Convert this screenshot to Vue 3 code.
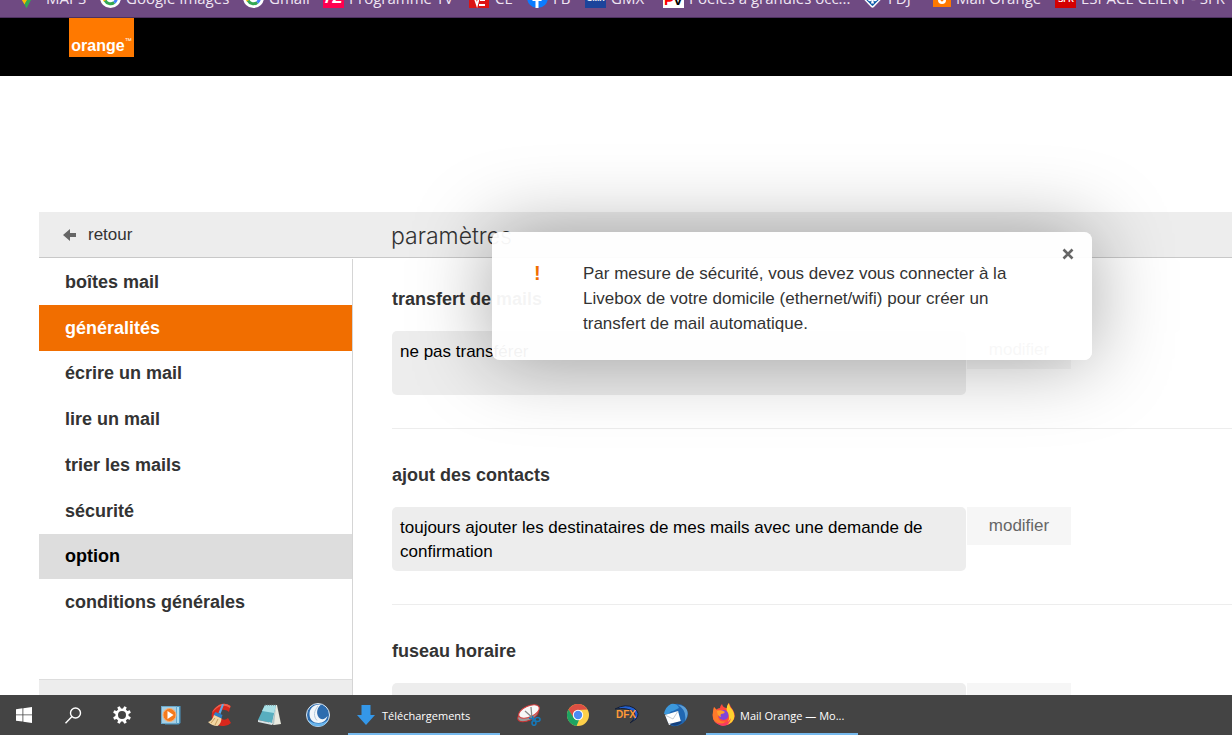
<template>
  <div class="screen">
    <!-- barre de favoris du navigateur -->
    <nav class="bookmarks" aria-label="favoris">
      <a v-for="b in bookmarks" :key="b.label" href="#" class="bookmark">
        <svg v-if="b.icon === 'maps'" class="fav" viewBox="0 0 21 21">
          <path d="M3.500 8L10.500 21L17.500 8C17.500 4 14 1 10.500 1S3.500 4 3.500 8z" fill="#34a853" />
          <path d="M3.500 8a7 7 0 0 1 3-6l5 5-6 6z" fill="#ea4335" />
          <path d="M4 10l4.500 7.500 5-8.500-3-2z" fill="#fbbc04" />
          <path d="M8.500 17.500L10.500 21l5-9-2-3z" fill="#34a853" />
        </svg>
        <svg v-else-if="b.icon === 'google'" class="fav" viewBox="0 0 21 21">
          <circle cx="10.500" cy="10.500" r="10.500" fill="#fff" />
          <path d="M5.200 7.500a6 6 0 0 1 10-1.500" fill="none" stroke="#ea4335" stroke-width="3" />
          <path d="M5.200 7.500a6 6 0 0 0 0 6.500" fill="none" stroke="#fbbc05" stroke-width="3" />
          <path d="M5.200 13.500a6 6 0 0 0 9 2" fill="none" stroke="#34a853" stroke-width="3" />
          <path d="M10.500 10.500h6a6 6 0 0 1-2.300 5" fill="none" stroke="#4285f4" stroke-width="3" />
        </svg>
        <svg v-else-if="b.icon === 'tele'" class="fav" viewBox="0 0 21 21">
          <rect width="21" height="21" fill="#ff0050" />
          <text x="10" y="16" font-size="16" font-style="italic" font-weight="bold" text-anchor="middle" fill="#fff">7Z</text>
        </svg>
        <svg v-else-if="b.icon === 'ce'" class="fav" viewBox="0 0 21 21">
          <rect width="20" height="21" fill="#dc1414" />
          <path d="M3 12h3l2 6 3-11h7M11 13h5M10 18h6" fill="none" stroke="#fff" stroke-width="1.800" />
        </svg>
        <svg v-else-if="b.icon === 'facebook'" class="fav" viewBox="0 0 21 21">
          <circle cx="10.500" cy="10.500" r="10.500" fill="#0a7cff" />
          <path d="M8.500 21v-7H5.500v-3h3V8.500C8.500 5.500 10 4 12.500 4h2v3H13c-1.200 0-1.500.7-1.500 1.700V11h3.500l-.5 3h-3v7z" fill="#fff" />
        </svg>
        <svg v-else-if="b.icon === 'gmx'" class="fav" viewBox="0 0 21 21">
          <rect width="21" height="21" fill="#1c449b" />
          <text x="10.500" y="14" font-size="8" font-weight="bold" text-anchor="middle" fill="#fff">GMX</text>
        </svg>
        <svg v-else-if="b.icon === 'pv'" class="fav" viewBox="0 0 21 21">
          <rect width="21" height="21" fill="#fff" />
          <text x="1" y="18" font-size="15" font-weight="bold" fill="#f00">P</text>
          <text x="10" y="18" font-size="15" font-weight="bold" fill="#000">V</text>
        </svg>
        <svg v-else-if="b.icon === 'fdj'" class="fav" viewBox="0 0 21 21">
          <path d="M0 10.500L10.500 0L21 10.500L12 20q-1.500 1.400-3 0z" fill="#fff" />
          <path d="M1.800 10.500L10.500 2l8.700 8.500-8 8q-.7.800-1.400 0z" fill="#0c5ba8" />
          <circle cx="8" cy="12" r="2.200" fill="#fff" />
          <circle cx="13" cy="12" r="2.200" fill="#fff" />
          <circle cx="10.500" cy="8" r="2.200" fill="#fff" />
          <path d="M10 12l-1 4.500h3L11 12z" fill="#fff" />
        </svg>
        <svg v-else-if="b.icon === 'mail'" class="fav fav-small" viewBox="0 0 18 18">
          <rect width="18" height="18" fill="#ff7900" />
          <path d="M5 7h8v4q0 4-4 4t-4-4z" fill="#fff" />
          <path d="M6.500 9l2.500 2.500L11.500 9" fill="none" stroke="#ff7900" stroke-width="1.800" />
        </svg>
        <svg v-else class="fav" viewBox="0 0 21 21">
          <rect width="21" height="21" fill="#d40000" />
          <text x="11" y="15" font-size="8" font-weight="bold" text-anchor="middle" fill="#fff">SFR</text>
        </svg>
        <span>{{ b.label }}</span>
      </a>
    </nav>

    <header class="site-header">
      <a href="#" class="logo"><span>orange</span><sup>™</sup></a>
    </header>

    <div class="settings">
      <div class="title-bar">
        <a href="#" class="back">
          <svg width="14" height="12" viewBox="0 0 14 12">
            <path d="M0 6L7 0v4h6v4H7v4z" fill="#666" />
          </svg>
          retour
        </a>
        <h1>paramètres</h1>
      </div>

      <div class="columns">
        <aside>
          <ul class="menu">
            <li v-for="item in menu" :key="item">
              <a href="#" :class="{ active: item === current, hovered: item === hovered }" @click.prevent="current = item">{{ item }}</a>
            </li>
          </ul>
          <div class="menu-footer"></div>
        </aside>

        <main>
          <section v-for="s in sections" :key="s.title">
            <h2>{{ s.title }}</h2>
            <div class="setting">
              <p>{{ s.value }}</p>
              <button type="button">modifier</button>
            </div>
          </section>
        </main>
      </div>

      <!-- message d'avertissement -->
      <div v-if="showAlert" class="overlay">
        <div class="alert" role="alertdialog" aria-labelledby="alert-text">
          <span class="mark">!</span>
          <p id="alert-text">Par mesure de sécurité, vous devez vous connecter à la Livebox de votre domicile (ethernet/wifi) pour créer un transfert de mail automatique.</p>
          <button type="button" class="close" aria-label="fermer" @click="showAlert = false">
            <svg width="12" height="12" viewBox="0 0 12 12">
              <path d="M1.500 1.500l9 9M10.500 1.500l-9 9" stroke="#666" stroke-width="2.600" />
            </svg>
          </button>
        </div>
      </div>
    </div>

    <!-- barre des tâches -->
    <footer class="taskbar">
      <button type="button" aria-label="Démarrer">
        <svg width="16" height="16" viewBox="0 0 16 16" fill="#fff">
          <path d="M0 2.200l6.500-.9v6.200H0zM7.300 1.200L16 0v7.500H7.300zM0 8.300h6.500v6.300L0 13.700zM7.300 8.300H16V16l-8.700-1.200z" />
        </svg>
      </button>
      <button type="button" aria-label="Rechercher">
        <svg width="17" height="17" viewBox="0 0 17 17" fill="none" stroke="#fff" stroke-width="1.400">
          <circle cx="10.500" cy="6" r="5" />
          <path d="M7 9.500L.5 16.300" />
        </svg>
      </button>
      <button type="button" aria-label="Paramètres">
        <svg width="18" height="18" viewBox="0 0 18 18">
          <circle cx="9" cy="9" r="5.300" fill="none" stroke="#fff" stroke-width="2.600" />
          <path v-for="a in 8" :key="a" :transform="`rotate(${a * 45 + 22.5} 9 9)`" d="M7.300 3.500L7.700 0h2.600l.4 3.500z" fill="#fff" />
        </svg>
      </button>
      <button type="button" aria-label="Lecteur multimédia">
        <svg width="20" height="20" viewBox="0 0 20 20">
          <path d="M4 1h15.500v17l-2 1.500H4z" fill="#4d98c4" />
          <path d="M16 2h2v16h-2z" fill="#a9daee" />
          <rect x="0.500" y="1.500" width="15" height="17" fill="#a5cfe5" stroke="#6aa9cb" />
          <circle cx="8.500" cy="10" r="6.500" fill="#f47a1c" stroke="#fbb071" />
          <path d="M6.500 6l6 4-6 4z" fill="#fff" />
        </svg>
      </button>
      <button type="button" aria-label="CCleaner">
        <svg width="24" height="24" viewBox="0 0 24 24">
          <path d="M22.500 3Q17-1 11 2 2 7 4 15q3 9 12 8 4 0 7-3l-3-5q-3 3-6 1-4-2-3-6 2-4 6-3 2 0 4 2z" fill="#d8271c" />
          <path d="M22.500 3Q17-1 11 2 6 5 4 10q5-6 9-7 5-1 9 2z" fill="#f0604c" />
          <path d="M14 1l2 .5L12.500 11l-2-1z" fill="#5aa9e6" />
          <path d="M7.500 9l7 3-1 3.500-8-3.500z" fill="#2d7fc5" />
          <path d="M6 12l7.500 3.500Q13 21 9.500 23 4 23 0 19q4-1 6-7z" fill="#f2d6a2" />
          <path d="M7 15l-4 5M10 16l-3 6" stroke="#c79d5c" />
        </svg>
      </button>
      <button type="button" aria-label="Bloc-notes">
        <svg width="23" height="22" viewBox="0 0 23 22">
          <path d="M7 1h12l4 19-7 1-5-2z" fill="#e8e9df" />
          <path d="M7 1h11l-4 18L0 16z" fill="#58aebf" />
          <path d="M7 1h11l-2 8L4 7z" fill="#a9e0e6" />
          <path d="M18 3l-4 16 2 2z" fill="#b4c4c6" />
          <path d="M0 16l14 3v2L0 18z" fill="#d9e3e6" />
          <path d="M7 1h12" stroke="#666" stroke-dasharray="1 1" />
        </svg>
      </button>
      <button type="button" aria-label="Navigateur">
        <svg width="24" height="24" viewBox="0 0 24 24">
          <circle cx="12" cy="12" r="11.500" fill="#2d6cae" stroke="#dce8f2" />
          <path d="M2 17a11 11 0 0 0 20 0q-9 7-20 0z" fill="#69b5ec" />
          <path d="M15 1.500C7 1 3.500 6 3.500 11c0 6 4 9 9 9s8-3 9-7c-2 3-5 4-7.500 2.500-4-3-4-10 1-14z" fill="#f1f6fa" />
          <path d="M12 3C8 8 7 13 11 17.500" fill="none" stroke="#b3cadd" />
        </svg>
      </button>
      <button type="button" class="window">
        <svg width="18" height="20" viewBox="0 0 18 20">
          <path d="M4.500 0h9v10H18l-9 10-9-10h4.500z" fill="#3497e8" />
        </svg>
        <span>Téléchargements</span>
      </button>
      <button type="button" aria-label="Outil Capture">
        <svg width="24" height="22" viewBox="0 0 24 22">
          <ellipse cx="11" cy="11" rx="11" ry="5.500" fill="#9a9a9a" stroke="#c83232" transform="rotate(-24 11 11)" />
          <ellipse cx="12" cy="7.500" rx="11" ry="5.500" fill="#f8f8f8" stroke="#d63c3c" transform="rotate(-24 12 7.500)" />
          <path d="M8 7l9 8M14 3l1 12" stroke="#888" stroke-width="1.300" />
          <ellipse cx="20.500" cy="15.500" rx="2.500" ry="2" fill="none" stroke="#1678b8" stroke-width="1.600" />
          <ellipse cx="17" cy="19" rx="2" ry="2.300" fill="none" stroke="#1678b8" stroke-width="1.600" />
          <path d="M12 14l6 1.500M15.500 12l1 5" stroke="#1678b8" stroke-width="1.600" />
        </svg>
      </button>
      <button type="button" aria-label="Chrome">
        <svg width="22" height="22" viewBox="0 0 22 22">
          <circle cx="11" cy="11" r="11" fill="#fdd04a" />
          <path d="M1.500 5.500A11 11 0 0 1 20.500 5.500L11 6 6.200 13.700z" fill="#dd4f43" />
          <path d="M1.500 5.500L6.500 13.500Q8.500 16.500 12 16L9.500 22A11 11 0 0 1 1.500 5.500z" fill="#1da462" />
          <circle cx="11" cy="11" r="5.200" fill="#fff" />
          <circle cx="11" cy="11" r="4.200" fill="#4c8bf5" />
        </svg>
      </button>
      <button type="button" aria-label="DFX">
        <svg width="24" height="20" viewBox="0 0 24 20">
          <path d="M0 4Q11-2 19 3q7 5 2 11l-6 4q7-6 4-11Q12 2 0 4z" fill="#225fd0" stroke="#172034" />
          <text x="11" y="13" font-size="10" font-weight="bold" text-anchor="middle" fill="#ff9a38">DFX</text>
        </svg>
      </button>
      <button type="button" aria-label="Thunderbird">
        <svg width="24" height="24" viewBox="0 0 24 24">
          <path d="M6 3Q14-2 21 4q5 7 1 13-5 7-14 6-5-3-6-10z" fill="#2067b2" />
          <path d="M0 11Q1 4 7 1q6-1 8 4L9 8Q6 8 4 12z" fill="#3c98dc" />
          <path d="M14 2q9 5 7 16 4-6 2-11-3-5-9-5z" fill="#5d9fd6" />
          <path d="M1 12l13-4 3 11-12 3z" fill="#fff" />
          <path d="M1 12l8 4 5-8" fill="none" stroke="#c5ccd4" />
          <path d="M4 20q7 6 14-1l-1-1-12 3z" fill="#15417e" />
        </svg>
      </button>
      <button type="button" class="window">
        <svg width="23" height="24" viewBox="0 0 23 24">
          <path d="M2 4q1 2 2 3 2-2 4-2 0-2 2-4 1 4 5 4 0-3 2-5 2 5 4 7 4 7-1 12-5 5-12 3Q-1 19 1 10z" fill="#ff4a3d" />
          <path d="M16.500 0q1 4 4 7 4 7-.5 12-3 3-7 3 6-5 3-11-3-5 .5-11z" fill="#ffd02e" />
          <path d="M2 4q3 4 6 3.500L6 14Q8 20 14 18q-5 6-11 1-4-5-1-15z" fill="#ff7a2a" />
          <path d="M2 17q4 5 11 3 4-1 6-5-1 7-8 8-6-1-9-6z" fill="#f83a64" />
          <circle cx="11.500" cy="12" r="5" fill="#8146d8" />
          <path d="M5 8q5-2 8 1-1 2-4 2-1 1 0 3-4-1-4-6z" fill="#ffa02a" />
        </svg>
        <span>Mail Orange — Mo...</span>
      </button>
    </footer>
  </div>
</template>

<script setup>
import { ref } from 'vue';

// favoris
const bookmarks = [
  { label: 'MAPS', icon: 'maps' },
  { label: 'Google Images', icon: 'google' },
  { label: 'Gmail', icon: 'google' },
  { label: 'Programme TV', icon: 'tele' },
  { label: 'CE', icon: 'ce' },
  { label: 'FB', icon: 'facebook' },
  { label: 'GMX', icon: 'gmx' },
  { label: 'Poêles à granulés occ...', icon: 'pv' },
  { label: 'FDJ', icon: 'fdj' },
  { label: 'Mail Orange', icon: 'mail' },
  { label: 'ESPACE CLIENT - SFR', icon: 'sfr' },
];

// menu de gauche
const menu = [
  'boîtes mail', 'généralités', 'écrire un mail', 'lire un mail',
  'trier les mails', 'sécurité', 'option', 'conditions générales',
];
const current = ref('généralités');
const hovered = ref('option');

const sections = [
  { title: 'transfert de mails', value: 'ne pas transférer' },
  { title: 'ajout des contacts', value: 'toujours ajouter les destinataires de mes mails avec une demande de confirmation' },
  { title: 'fuseau horaire', value: '' },
];

const showAlert = ref(true);
</script>

<style>
body {
  margin: 0;
  background: #fff;
}
</style>

<style scoped>
.screen {
  height: 100vh;
  display: flex;
  flex-direction: column;
  overflow: hidden;
  font-family: "Liberation Sans", Arial, sans-serif;
  font-size: 17px;
  color: #333;
}

a {
  color: inherit;
  text-decoration: none;
}

h1, h2, p, ul {
  margin: 0;
  padding: 0;
}

button {
  border: none;
  padding: 0;
  background: none;
  font: inherit;
  color: inherit;
  cursor: pointer;
}

svg {
  flex: none;
}

.bookmarks {
  flex: none;
  display: grid;
  grid-template-columns: 84px 143px 80px 146px 58px 58px 78px 199px 71px 122px 1fr;
  align-content: end;
  height: 8px;
  padding: 0 0 9px 16px;
  border-bottom: 1px solid #4d3160;
  background: #6f4a82;
  overflow: hidden;
  font-family: "Open Sans", "Noto Sans", sans-serif;
  font-size: 15px;
  line-height: 20px;
  color: #efe6f3;
}

.bookmark {
  display: flex;
  align-items: center;
  gap: 5px;
  height: 21px;
  white-space: nowrap;
}

.bookmark:first-child {
  gap: 9px;
}

.fav {
  width: 21px;
  height: 21px;
  font-family: "Liberation Sans", Arial, sans-serif;
}

.fav-small {
  width: 18px;
  height: 18px;
}

.site-header {
  flex: none;
  height: 58px;
  padding-left: 69px;
  background: #000;
}

.logo {
  display: flex;
  align-items: flex-end;
  justify-content: center;
  width: 65px;
  height: 39px;
  background: #ff7900;
  color: #fff;
  font-size: 16px;
  font-weight: bold;
  line-height: 22px;
}

.logo sup {
  font-size: 7px;
  font-weight: normal;
  line-height: 32px;
}

.settings {
  flex: 1;
  min-height: 0;
  display: flex;
  flex-direction: column;
  position: relative;
  margin: 136px 0 0 39px;
}

.title-bar {
  flex: none;
  display: flex;
  align-items: center;
  height: 45px;
  border-bottom: 1px solid #c8c8c8;
  background: #ededed;
}

.back {
  display: flex;
  align-items: center;
  gap: 11px;
  width: 328px;
  padding-left: 24px;
}

h1 {
  padding-top: 2px;
  font-family: Inter, "Liberation Sans", sans-serif;
  font-size: 23px;
  font-weight: 300;
  line-height: 32px;
}

.columns {
  flex: 1;
  min-height: 0;
  display: flex;
}

aside {
  flex: none;
  width: 313px;
  display: flex;
  flex-direction: column;
  margin-top: 1px;
  border-right: 1px solid #d5d5d5;
}

.menu {
  flex: none;
  display: grid;
  grid-auto-rows: 1fr;
  min-height: 366px;
  margin-bottom: 54px;
  list-style: none;
}

.menu a {
  box-sizing: border-box;
  display: flex;
  align-items: center;
  height: 100%;
  padding: 1px 0 0 26px;
  font-size: 18px;
  font-weight: bold;
}

.menu a.active {
  background: #f16e00;
  color: #fff;
}

.menu a.hovered {
  background: #ddd;
  color: #000;
}

.menu-footer {
  flex: 1;
  border-top: 1px solid #ddd;
  background: #ededed;
}

main {
  flex: 1;
  min-width: 0;
  padding-left: 39px;
  overflow: hidden;
}

section {
  padding: 34px 0 33px;
  border-bottom: 1px solid #ededed;
}

section:first-child {
  padding-top: 29px;
}

h2 {
  margin-bottom: 20px;
  font-size: 18px;
  line-height: 24px;
}

.setting {
  display: flex;
  align-items: flex-start;
  gap: 1px;
}

.setting p {
  box-sizing: border-box;
  flex: 0 1 574px;
  min-height: 64px;
  padding: 9px 8px 7px;
  border-radius: 5px;
  background: #ededed;
  color: #000;
  line-height: 24px;
}

.setting button {
  width: 104px;
  height: 38px;
  background: #f6f6f6;
  color: #666;
}

.overlay {
  position: absolute;
  top: 20px;
  left: 313px;
  right: 0;
  display: flex;
  justify-content: center;
}

.alert {
  box-sizing: border-box;
  display: flex;
  align-items: flex-start;
  width: 600px;
  padding: 29px 18px 24px 42px;
  border-radius: 8px;
  background: rgba(255, 255, 255, 0.95);
  box-shadow: 0 0 80px rgba(0, 0, 0, 0.35);
  line-height: 25px;
}

.alert .mark {
  width: 49px;
  color: #f16e00;
  font-size: 20px;
  font-weight: bold;
}

.alert p {
  flex: 0 1 430px;
}

.close {
  display: flex;
  margin: -13px 0 0 auto;
}

.taskbar {
  flex: none;
  position: relative;
  display: flex;
  gap: 1px;
  height: 40px;
  background: #444;
  font-size: 11px;
  color: #fff;
}

.taskbar button {
  flex: none;
  display: flex;
  align-items: center;
  justify-content: center;
  width: 48px;
}

.taskbar .window {
  box-sizing: border-box;
  justify-content: flex-start;
  gap: 7px;
  width: 152px;
  margin: 0 4px 0 5px;
  padding: 2px 0 0 9px;
  border-bottom: 2px solid #76b9ed;
  font-family: "Open Sans", "Noto Sans", sans-serif;
  white-space: nowrap;
}

.taskbar .window:last-child {
  gap: 5px;
  padding-left: 6px;
}
</style>
